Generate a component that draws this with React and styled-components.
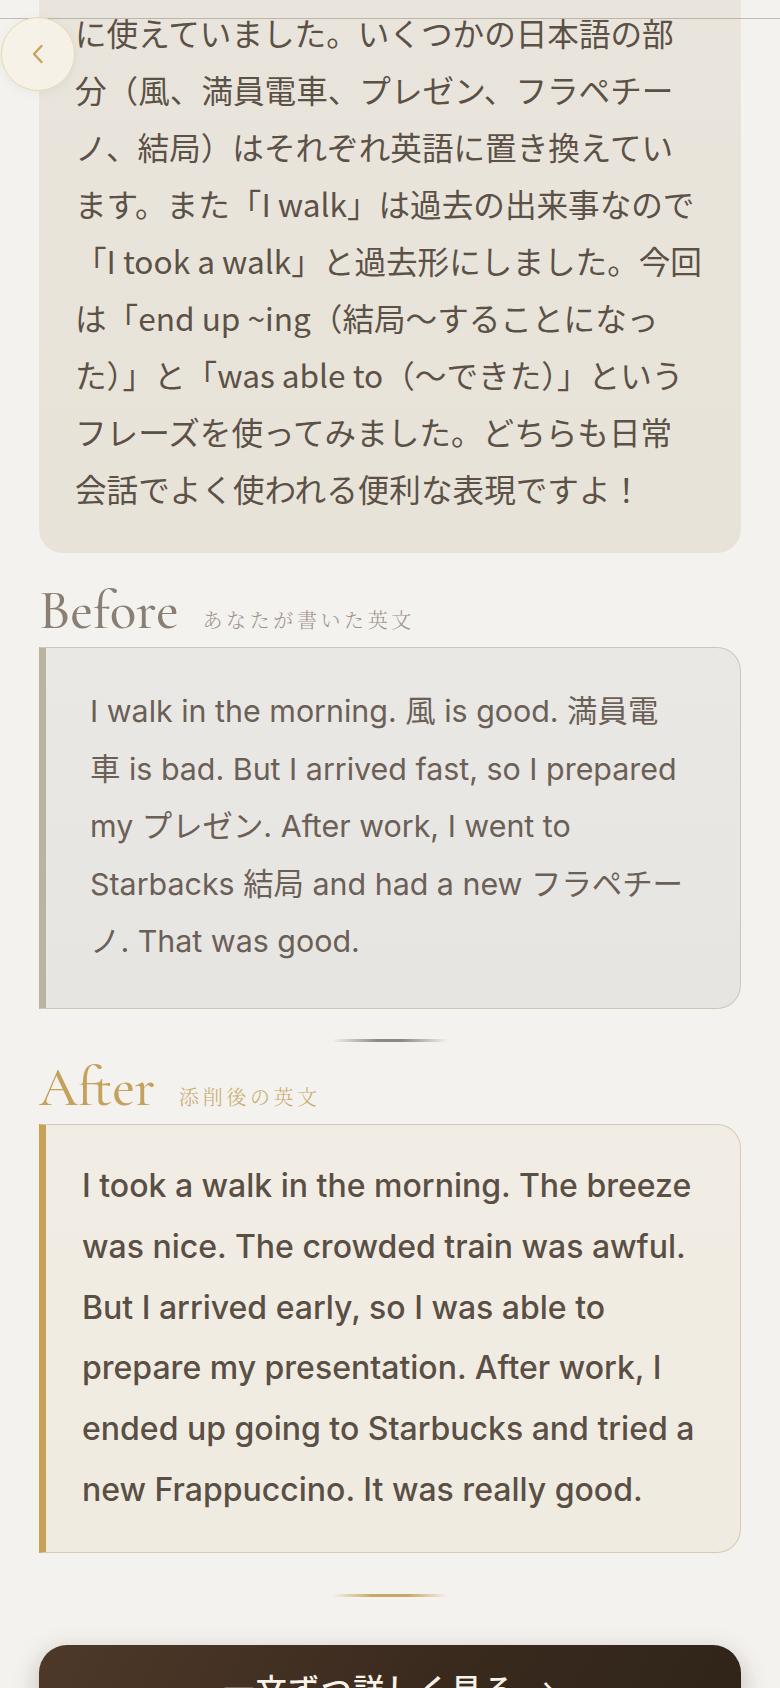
import styled, { createGlobalStyle } from "styled-components";

const GlobalStyle = createGlobalStyle`
    * {
        box-sizing: border-box;
    }

    body {
        margin: 0;
        background: #f4f2ef;
        font-family: "Inter", "Noto Sans CJK JP", sans-serif;
        color: #5f5449;
        overflow-x: hidden;
    }
`;

const TopBar = styled.div`
    position: fixed;
    top: 0;
    left: 0;
    right: 0;
    height: 19px;
    border-bottom: 1.5px solid rgba(150, 142, 132, 0.55);
    z-index: 5;
`;

const BackButton = styled.button`
    position: fixed;
    top: 17px;
    left: 1px;
    width: 74px;
    height: 74px;
    border-radius: 50%;
    border: 1.5px solid #e6d7b4;
    background: rgba(246, 241, 231, 0.94);
    box-shadow: 0 2px 8px rgba(120, 100, 60, 0.08);
    display: flex;
    align-items: center;
    justify-content: center;
    padding: 0;
    z-index: 6;
`;

const Page = styled.main`
    padding: 0 39px 60px;
    display: flex;
    flex-direction: column;
`;

const ExplanationCard = styled.section`
    margin-top: -30px;
    padding: 34px 38px 36px 36px;
    background: linear-gradient(180deg, #e9e5dc 0%, #e8e3d9 100%);
    border-radius: 24px;
    font-family: "Noto Sans CJK JP", sans-serif;
    font-size: 31.6px;
    line-height: 57px;
    color: #5c5147;
`;

const Heading = styled.div`
    display: flex;
    align-items: baseline;
    gap: 24px;
    margin-top: ${(p) => p.$top}px;
    margin-bottom: 9px;
    color: ${(p) => (p.$tone === "gold" ? "#c4a15c" : "#8a7f73")};
`;

const HeadingTitle = styled.h2`
    margin: 0;
    font-family: "Cormorant Garamond", "Liberation Serif", serif;
    font-weight: 500;
    font-size: 55px;
    line-height: 1;
`;

const HeadingSub = styled.span`
    font-family: "Noto Serif CJK JP", "Noto Sans CJK JP", serif;
    font-weight: 300;
    font-size: 20px;
    line-height: 1;
    letter-spacing: 3.6px;
    color: ${(p) => (p.$tone === "gold" ? "#c9ab6c" : "#9d9389")};
`;

const TextCard = styled.div`
    border: 1.5px solid ${(p) => (p.$tone === "gold" ? "#d6cab5" : "#cfc6b7")};
    border-left: 7px solid ${(p) => (p.$tone === "gold" ? "#c6a257" : "#b9b39f")};
    border-radius: 0 24px 24px 0;
    background: ${(p) =>
        p.$tone === "gold"
            ? "linear-gradient(180deg, #f2ede4 0%, #f0ebe1 100%)"
            : "linear-gradient(180deg, #eae8e4 0%, #e7e5e1 100%)"};
    padding: ${(p) => (p.$tone === "gold" ? "31px 30px 31px 36px" : "35px 52px 37px 44px")};
    font-family: "Inter", "Noto Sans CJK JP", sans-serif;
    font-size: ${(p) => (p.$tone === "gold" ? 32 : 30.4)}px;
    line-height: ${(p) => (p.$tone === "gold" ? 60.8 : 57.6)}px;
    font-weight: ${(p) => (p.$tone === "gold" ? 500 : 400)};
    color: ${(p) => (p.$tone === "gold" ? "#5a4f45" : "#6b6057")};
`;

const Divider = styled.div`
    align-self: center;
    width: 116px;
    height: 3px;
    border-radius: 2px;
    margin-top: ${(p) => p.$top}px;
    background: ${(p) =>
        p.$tone === "gold"
            ? "linear-gradient(90deg, rgba(200,167,98,0) 0%, #c8a762 35%, #c8a762 65%, rgba(200,167,98,0) 100%)"
            : "linear-gradient(90deg, rgba(130,125,120,0) 0%, #8d8883 40%, #8d8883 60%, rgba(130,125,120,0) 100%)"};
`;

const PrimaryButton = styled.button`
    margin-top: 48px;
    width: 100%;
    border: none;
    border-radius: 28px;
    padding: 22px 20px 34px;
    background: linear-gradient(120deg, #4e3929 0%, #3a2a1e 55%, #2f2419 100%);
    box-shadow: 0 8px 26px rgba(60, 40, 20, 0.28);
    color: #f8f3ea;
    font-family: "Noto Sans CJK JP", sans-serif;
    font-size: 31px;
    font-weight: 500;
    line-height: 42px;
    letter-spacing: 1.5px;
`;

const Chevron = () => (
    <svg width="16" height="22" viewBox="0 0 16 22" fill="none">
        <path d="M11.5 3 L4 11 L11.5 19" stroke="#c6a35e" strokeWidth="2.4" strokeLinecap="round" strokeLinejoin="round" />
    </svg>
);

const SectionHeading = ({ tone, title, sub, top }) => (
    <Heading $tone={tone} $top={top}>
        <HeadingTitle>{title}</HeadingTitle>
        <HeadingSub $tone={tone}>{sub}</HeadingSub>
    </Heading>
);

const App = () => {
    return (
        <>
            <GlobalStyle />
            <TopBar />
            <BackButton aria-label="戻る">
                <Chevron />
            </BackButton>
            <Page>
                <ExplanationCard>
                    に使えていました。いくつかの日本語の部分（風、満員電車、プレゼン、フラペチーノ、結局）はそれぞれ英語に置き換えています。また「I walk」は過去の出来事なので「I took a walk」と過去形にしました。今回は「end up ~ing（結局〜することになった）」と「was able to（〜できた）」というフレーズを使ってみました。どちらも日常会話でよく使われる便利な表現ですよ！
                </ExplanationCard>

                <SectionHeading tone="gray" title="Before" sub="あなたが書いた英文" top={30} />
                <TextCard $tone="gray">
                    I walk in the morning. 風 is good. 満員電車 is bad. But I arrived fast, so I prepared my プレゼン. After work, I went to Starbacks 結局 and had a new フラペチーノ. That was good.
                </TextCard>

                <Divider $tone="gray" $top={30} />

                <SectionHeading tone="gold" title="After" sub="添削後の英文" top={18} />
                <TextCard $tone="gold">
                    I took a walk in the morning. The breeze was nice. The crowded train was awful. But I arrived early, so I was able to prepare my presentation. After work, I ended up going to Starbucks and tried a new Frappuccino. It was really good.
                </TextCard>

                <Divider $tone="gold" $top={41} />

                <PrimaryButton>一文ずつ詳しく見る →</PrimaryButton>
            </Page>
        </>
    );
};

export default App;
